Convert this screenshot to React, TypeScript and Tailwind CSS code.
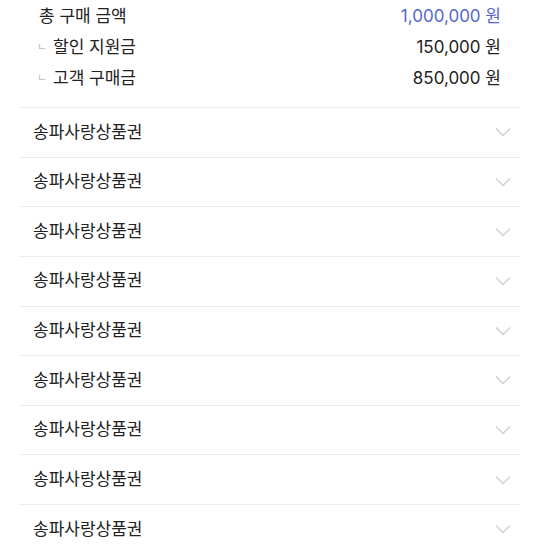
import React from "react";

const Chevron = () => (
  <svg width="16" height="10" viewBox="0 0 16 10" fill="none">
    <path d="M1 1.5 L8 8.5 L15 1.5" stroke="#cfcfcf" strokeWidth="1.3" />
  </svg>
);

export default function App() {
  const font = { fontFamily: 'Inter, "Noto Sans CJK KR", "Noto Sans", sans-serif' };
  return (
    <div className="w-[540px] h-[549px] bg-white overflow-hidden" style={font}>
      <div className="mx-[19px]">
        <div className="px-[20px] pt-[1px] pb-[13px] text-[17px] text-[#222]">
          <div className="flex justify-between items-center h-[31px]">
            <span>총 구매 금액</span>
            <span className="text-[#5366d3]">1,000,000 원</span>
          </div>
          <div className="flex justify-between items-center h-[31px]">
            <span className="flex items-center">
              <span className="text-[11px] text-[#bbb] w-[16px] -ml-[2px]">ㄴ</span>
              <span>할인 지원금</span>
            </span>
            <span>150,000 원</span>
          </div>
          <div className="flex justify-between items-center h-[31px]">
            <span className="flex items-center">
              <span className="text-[11px] text-[#bbb] w-[16px] -ml-[2px]">ㄴ</span>
              <span>고객 구매금</span>
            </span>
            <span>850,000 원</span>
          </div>
        </div>
        {Array.from({ length: 9 }).map((_, i) => (
          <div
            key={i}
            className="h-[49.625px] border-t border-[#ececec] flex items-center justify-between pl-[14px] pr-[10px] text-[17px] text-[#222]"
          >
            <span>송파사랑상품권</span>
            <Chevron />
          </div>
        ))}
      </div>
    </div>
  );
}
